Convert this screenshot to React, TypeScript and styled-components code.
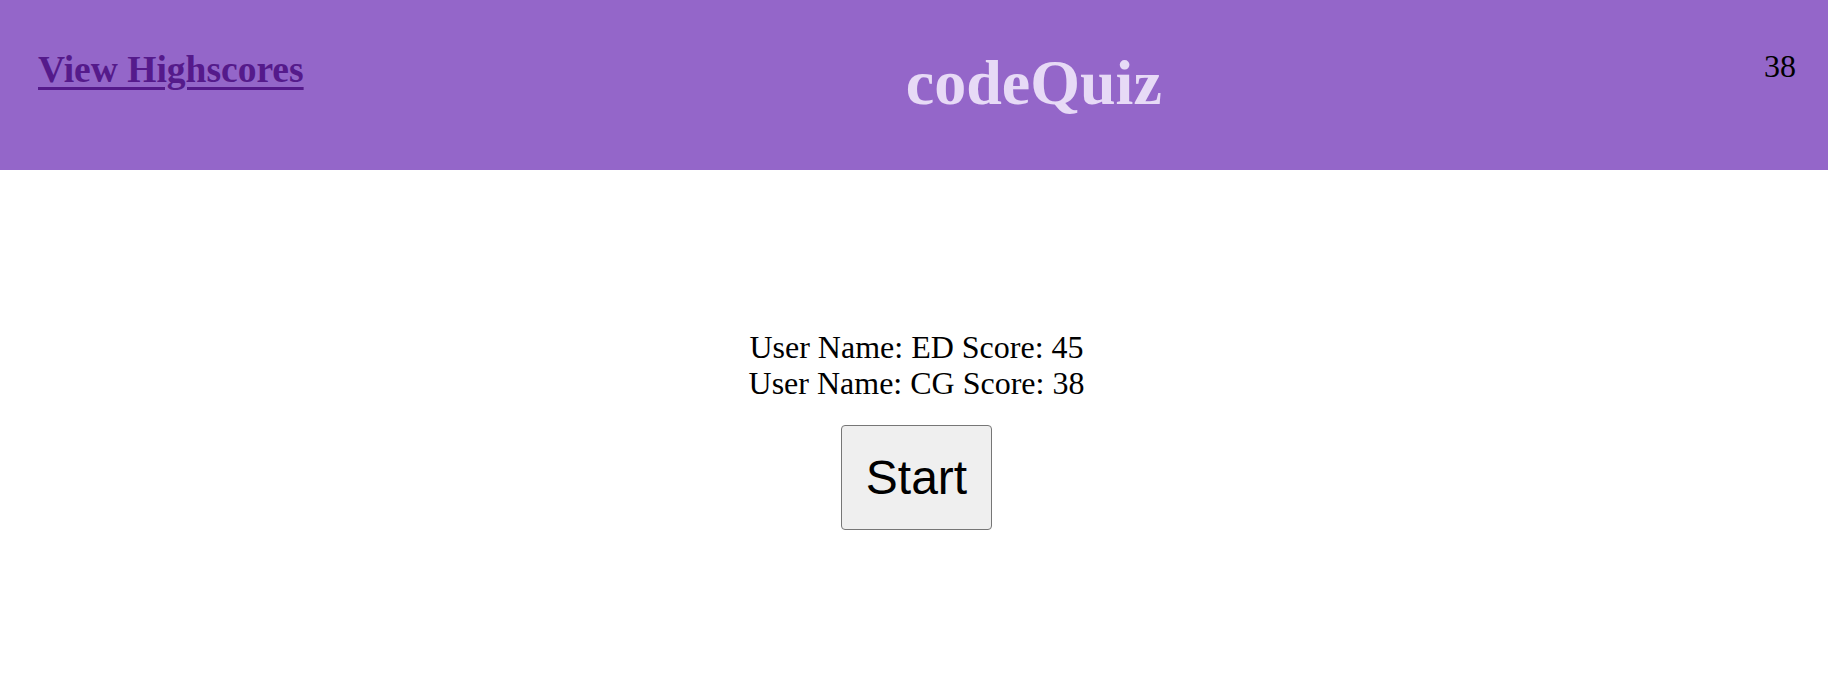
import React from "react";
import styled, { createGlobalStyle } from "styled-components";

const GlobalStyle = createGlobalStyle`
  html, body {
    margin: 0;
    padding: 0;
    background: #ffffff;
  }
  body {
    font-family: "Liberation Serif", "Times New Roman", serif;
    color: #000000;
  }
`;

const Header = styled.header`
  display: flex;
  justify-content: space-between;
  align-items: flex-start;
  height: 170px;
  box-sizing: border-box;
  padding: 51px 32px 0 38px;
  background: #9466c9;
`;

const HighscoreLink = styled.a`
  font-family: "Liberation Serif", "Times New Roman", serif;
  font-size: 37.5px;
  font-weight: 700;
  line-height: 1;
  color: #551a8b;
  text-decoration: underline;
  text-decoration-thickness: 3px;
  text-underline-offset: 5px;
`;

const Title = styled.h1`
  margin: 0;
  font-family: "Liberation Serif", "Times New Roman", serif;
  font-size: 64px;
  font-weight: 700;
  line-height: 1;
  color: #e7daf6;
`;

const Timer = styled.div`
  font-family: "Liberation Serif", "Times New Roman", serif;
  font-size: 32px;
  line-height: 1;
  margin-top: -1px;
  color: #000000;
`;

const Main = styled.main`
  display: flex;
  flex-direction: column;
  align-items: center;
  padding: 159px 0 0 5px;
`;

const ScoreList = styled.ul`
  list-style: none;
  margin: 0 0 24px;
  padding: 0;
  text-align: center;
`;

const ScoreItem = styled.li`
  font-family: "Liberation Serif", "Times New Roman", serif;
  font-size: 32px;
  line-height: 36px;
  color: #000000;
`;

const StartButton = styled.button`
  font-family: "Liberation Sans", Arial, sans-serif;
  font-size: 48px;
  padding: 24px 24px;
  background: #efefef;
  color: #000000;
  border: 1px solid #767676;
  border-radius: 4px;
  cursor: pointer;
`;

const scores = [
  { name: "ED", score: 45 },
  { name: "CG", score: 38 },
];

export default function App() {
  return (
    <>
      <GlobalStyle />
      <Header>
        <HighscoreLink href="#highscores">View Highscores</HighscoreLink>
        <Title>codeQuiz</Title>
        <Timer>38</Timer>
      </Header>
      <Main>
        <ScoreList>
          {scores.map((s) => (
            <ScoreItem key={s.name}>
              User Name: {s.name} Score: {s.score}
            </ScoreItem>
          ))}
        </ScoreList>
        <StartButton type="button">Start</StartButton>
      </Main>
    </>
  );
}
